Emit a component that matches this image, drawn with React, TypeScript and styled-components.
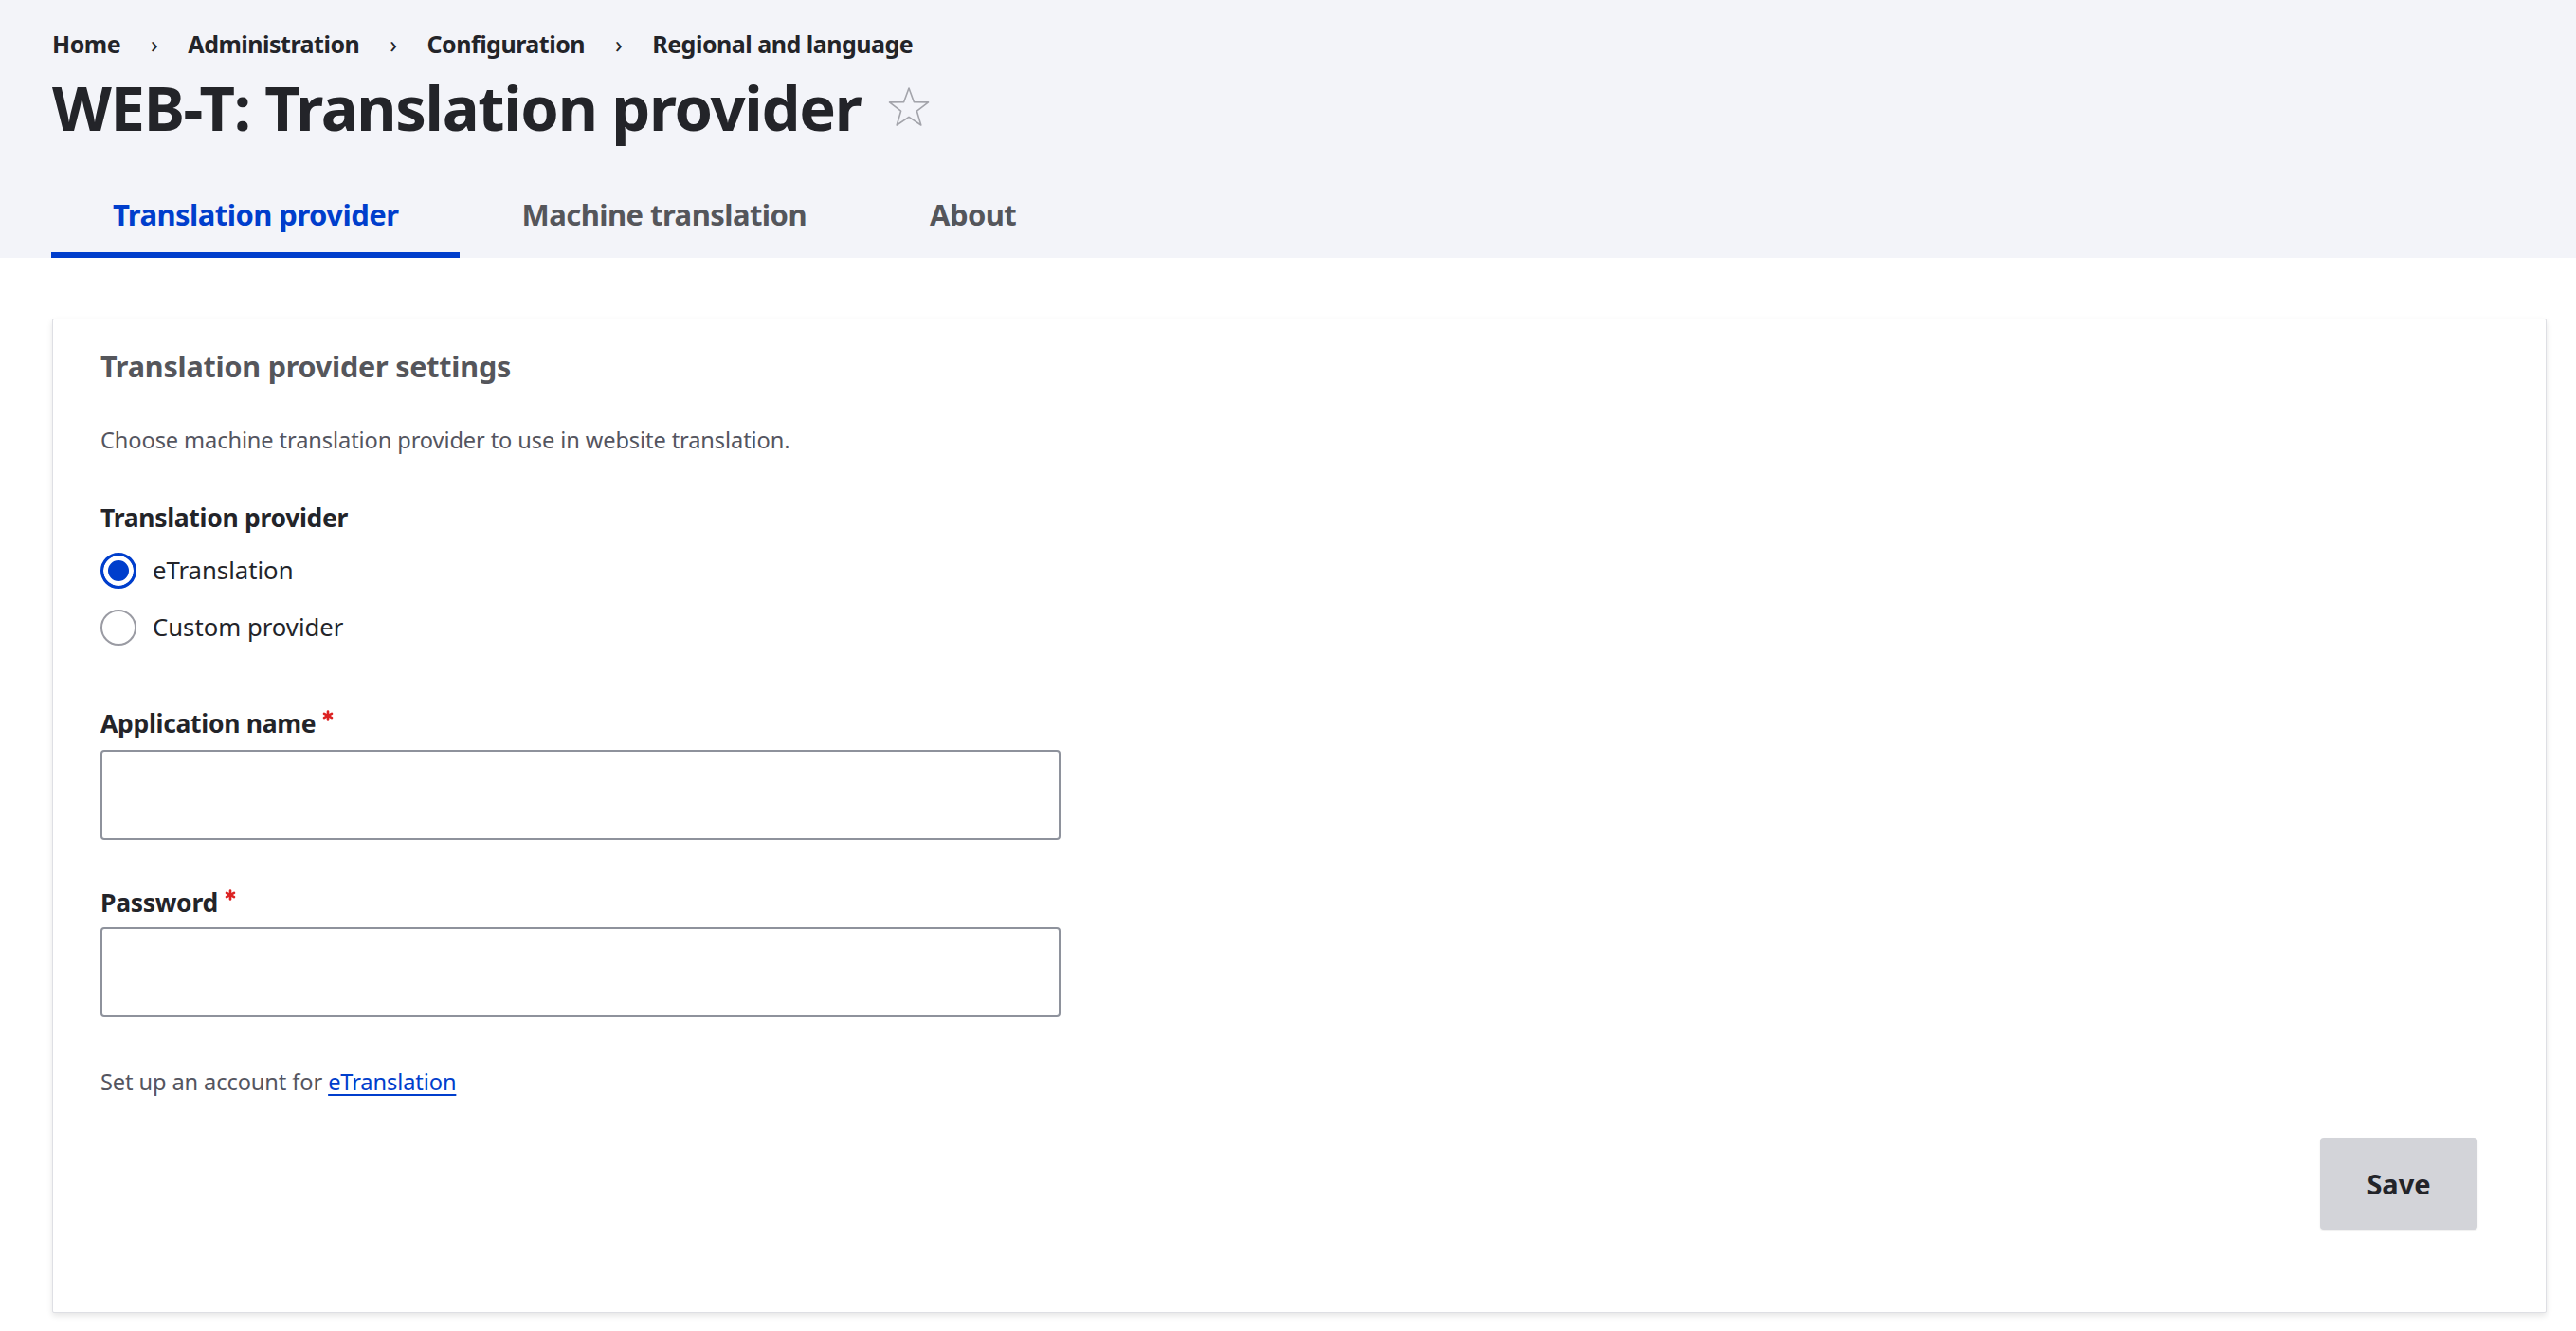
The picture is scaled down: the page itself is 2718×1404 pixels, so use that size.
import React from "react";
import styled, { createGlobalStyle } from "styled-components";

const GlobalStyle = createGlobalStyle`
  html, body {
    margin: 0;
    padding: 0;
    background: #ffffff;
  }
  body {
    font-family: "Noto Sans", "Open Sans", sans-serif;
    color: #232429;
  }
  * {
    box-sizing: border-box;
  }
`;

const Header = styled.header`
  background: #f3f4f9;
  padding: 28px 31px 0 55px;
`;

const Breadcrumb = styled.ol`
  display: flex;
  align-items: center;
  list-style: none;
  margin: 0;
  padding: 0;
  font-size: 25px;
  line-height: 36px;
  font-weight: 700;
  letter-spacing: -0.5px;
`;

const Crumb = styled.li`
  display: flex;
  align-items: center;
  color: #232429;
`;

const Separator = styled.span`
  margin: 0 32px 0 32px;
  font-weight: 400;
  font-size: 25px;
  color: #232429;
`;

const TitleRow = styled.div`
  display: flex;
  align-items: center;
  gap: 29px;
  margin-top: 9px;
`;

const Title = styled.h1`
  margin: 0;
  font-size: 65px;
  line-height: 80px;
  font-weight: 700;
  letter-spacing: -1.3px;
  color: #232429;
`;

const Tabs = styled.ul`
  display: flex;
  list-style: none;
  margin: 27px 0 0 -1px;
  padding: 0;
`;

const Tab = styled.li<{ $active?: boolean }>`
  padding: 26px 65px 20px;
  border-bottom: 6px solid ${({ $active }) => ($active ? "#003ecc" : "transparent")};
  font-size: 31px;
  line-height: 40px;
  font-weight: 700;
  letter-spacing: -0.55px;
  color: ${({ $active }) => ($active ? "#003ecc" : "#55565b")};
`;

const Main = styled.main`
  padding: 64px 31px 19px 55px;
`;

const Card = styled.section`
  background: #ffffff;
  border: 1px solid #dedfe4;
  border-radius: 2px;
  box-shadow: 0 3px 6px rgba(0, 0, 0, 0.1);
  padding: 29px 50px 87px 50px;
`;

const CardTitle = styled.h2`
  margin: 0;
  font-size: 30.5px;
  line-height: 40px;
  font-weight: 700;
  letter-spacing: -0.2px;
  color: #55565b;
`;

const Description = styled.p<{ $gap: number }>`
  margin: ${({ $gap }) => $gap}px 0 0;
  font-size: 23.6px;
  line-height: 36px;
  letter-spacing: -0.1px;
  color: #545560;
`;

const Link = styled.a`
  color: #003ecc;
  text-decoration: underline;
  text-underline-offset: 4px;
`;

const Label = styled.div<{ $gap: number }>`
  display: flex;
  align-items: flex-start;
  margin-top: ${({ $gap }) => $gap}px;
  font-size: 26.5px;
  line-height: 36px;
  font-weight: 700;
  letter-spacing: -0.3px;
  color: #232429;
`;

const Asterisk = styled.svg`
  margin: 4px 0 0 7px;
  flex: none;
`;

const RadioList = styled.div`
  display: flex;
  flex-direction: column;
  margin-top: 8px;
`;

const RadioRow = styled.label`
  display: flex;
  align-items: center;
  gap: 17px;
  height: 60px;
  font-size: 25.7px;
  line-height: 36px;
  color: #232429;
`;

const RadioDot = styled.span<{ $checked?: boolean }>`
  flex: none;
  width: 38px;
  height: 38px;
  border-radius: 50%;
  border: ${({ $checked }) => ($checked ? "3px solid #003ecc" : "2px solid #9a9ba3")};
  background: ${({ $checked }) => ($checked ? "#003ecc" : "#ffffff")};
  box-shadow: ${({ $checked }) => ($checked ? "inset 0 0 0 5px #ffffff" : "none")};
`;

const TextInput = styled.input`
  display: block;
  width: 1013px;
  height: 95px;
  border: 2px solid #8e929c;
  border-radius: 4px;
  background: #ffffff;
  font-size: 26px;
  padding: 0 20px;
`;

const InputWrap = styled.div<{ $gap: number }>`
  margin-top: ${({ $gap }) => $gap}px;
`;

const Actions = styled.div`
  display: flex;
  justify-content: flex-end;
  margin-top: 41px;
  padding-right: 22px;
`;

const SaveButton = styled.button`
  width: 166px;
  height: 97px;
  border: none;
  border-radius: 4px;
  background: #d3d4d9;
  box-shadow: 0 1px 2px rgba(0, 0, 0, 0.08);
  font-family: "Noto Sans", "Open Sans", sans-serif;
  font-size: 29px;
  font-weight: 700;
  color: #232429;
`;

const RequiredMark = () => (
  <Asterisk width="12" height="12" viewBox="0 0 12 12">
    <g stroke="#dc2323" strokeWidth="2.6" strokeLinecap="round">
      <line x1="6" y1="1.5" x2="6" y2="10.5" />
      <line x1="2" y1="3.8" x2="10" y2="8.2" />
      <line x1="2" y1="8.2" x2="10" y2="3.8" />
    </g>
  </Asterisk>
);

const StarIcon = () => (
  <svg width="44" height="44" viewBox="0 0 44 44">
    <polygon
      points="22,2 27.3,16.6 42.5,16.9 30.4,26.2 34.8,41 22,32.3 9.2,41 13.6,26.2 1.5,16.9 16.7,16.6"
      fill="none"
      stroke="#a3a4ab"
      strokeWidth="1.6"
      strokeLinejoin="round"
    />
  </svg>
);

const crumbs = ["Home", "Administration", "Configuration", "Regional and language"];

const App: React.FC = () => {
  return (
    <>
      <GlobalStyle />
      <Header>
        <Breadcrumb>
          {crumbs.map((c, i) => (
            <Crumb key={c}>
              {i > 0 && <Separator>›</Separator>}
              {c}
            </Crumb>
          ))}
        </Breadcrumb>
        <TitleRow>
          <Title>WEB-T: Translation provider</Title>
          <StarIcon />
        </TitleRow>
        <Tabs>
          <Tab $active>Translation provider</Tab>
          <Tab>Machine translation</Tab>
          <Tab>About</Tab>
        </Tabs>
      </Header>
      <Main>
        <Card>
          <CardTitle>Translation provider settings</CardTitle>
          <Description $gap={40}>
            Choose machine translation provider to use in website translation.
          </Description>
          <Label $gap={46}>Translation provider</Label>
          <RadioList>
            <RadioRow>
              <RadioDot $checked />
              eTranslation
            </RadioRow>
            <RadioRow>
              <RadioDot />
              Custom provider
            </RadioRow>
          </RadioList>
          <Label $gap={53}>
            Application name
            <RequiredMark />
          </Label>
          <InputWrap $gap={10}>
            <TextInput type="text" />
          </InputWrap>
          <Label $gap={48}>
            Password
            <RequiredMark />
          </Label>
          <InputWrap $gap={8}>
            <TextInput type="password" />
          </InputWrap>
          <Description $gap={50}>
            Set up an account for <Link href="#">eTranslation</Link>
          </Description>
          <Actions>
            <SaveButton type="button">Save</SaveButton>
          </Actions>
        </Card>
      </Main>
    </>
  );
};

export default App;
